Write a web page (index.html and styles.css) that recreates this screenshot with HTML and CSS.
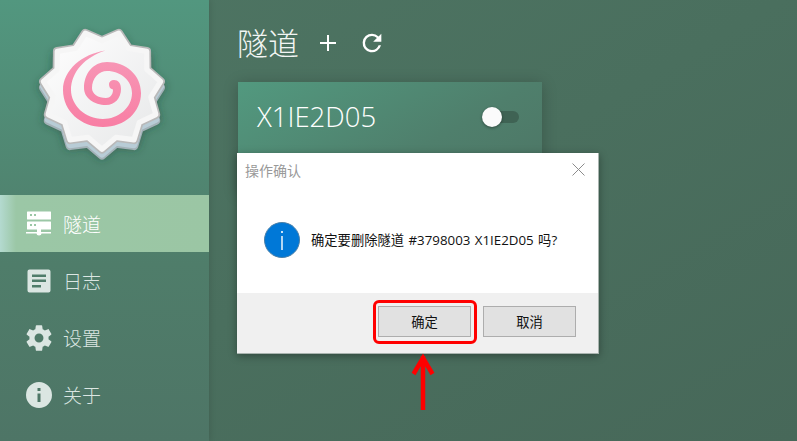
FILE: index.html
```html
<!DOCTYPE html>
<html lang="zh">
<head>
<meta charset="utf-8">
<title>隧道</title>
<link rel="stylesheet" href="styles.css">
</head>
<body>
<div class="app">
  <aside class="sidebar">
    <div class="logo">
      <svg width="209" height="195" viewBox="0 0 209 195">
        <defs>
          <linearGradient id="face" x1="0" y1="0" x2="1" y2="1">
            <stop offset="0" stop-color="#ffffff"/>
            <stop offset="1" stop-color="#e6e7e8"/>
          </linearGradient>
          <linearGradient id="swirl" x1="0" y1="0" x2="0" y2="1">
            <stop offset="0" stop-color="#f79ab8"/>
            <stop offset="1" stop-color="#f87ea4"/>
          </linearGradient>
          <filter id="soft" x="-20%" y="-20%" width="140%" height="140%">
            <feGaussianBlur stdDeviation="5"/>
          </filter>
          <polygon id="star" points="0,61 -14.300,48.900 -33,51.300 -38.500,33.300 -55.500,25.300 -50.400,7.200 -60.400,-8.700 -46.300,-21.100 -46.100,-39.900 -27.500,-42.800 -17.200,-58.500 0,-51 17.200,-58.500 27.500,-42.800 46.100,-39.900 46.300,-21.100 60.400,-8.700 50.400,7.200 55.500,25.300 38.500,33.300 33,51.300 14.300,48.900"/>
        </defs>
        <use href="#star" class="star-shadow" filter="url(#soft)" transform="translate(102 95) scale(.97)"/>
        <use href="#star" class="star-side-edge" transform="translate(102 96) scale(.97)"/>
        <use href="#star" class="star-side" transform="translate(102 95) scale(.97)"/>
        <use href="#star" class="star-edge" transform="translate(102 90) scale(.97)"/>
        <use href="#star" class="star-face" fill="url(#face)" transform="translate(102 90) scale(.97)"/>
        <path fill="url(#swirl)" d="M105.500 50.500 C 82 54, 63 70, 63 90 C 63 111, 81 127, 103 127 C 125 127, 141 112, 141 93 C 141 75, 126 62, 107 62 C 93 62, 84 74, 84 88 C 84 98, 94 105, 106 105 C 115 105, 121 98, 121 89 C 121 83, 118 80, 114 80 C 111 80, 109 82, 109 84 C 109 87, 110 89, 113 89.500 C 113 95, 110 98, 106 98 C 98 98, 92 94, 92 88 C 92 78, 99 71, 107 71 C 121 71, 132 81, 132 93 C 132 108, 118 119, 103 119 C 85 119, 71 105, 71 90 C 71 72, 85 57, 105.500 50.500 Z"/>
      </svg>
    </div>
    <nav class="menu">
      <a class="menu-item active">
        <svg class="menu-icon" viewBox="0 0 26 26" width="26" height="26">
          <path fill="currentColor" fill-rule="evenodd" d="M1.500 0.500h23a.5.5 0 0 1 .5.500v7a.5.5 0 0 1-.5.500h-23a.5.5 0 0 1-.5-.500v-7a.5.5 0 0 1 .5-.500zM4 3v2h2V3zM8 3v2h2V3zM1.500 10.500h23a.5.5 0 0 1 .5.500v7a.5.5 0 0 1-.5.500H15V21h10v1.500H15.500a2.500 2 0 0 1-5 0H0V21h11v-2.500H1.500a.5.500 0 0 1-.5-.500v-7a.5.5 0 0 1 .5-.500zM4 13v2h2v-2zM8 13v2h2v-2z"/>
        </svg>
        <span>隧道</span>
      </a>
      <a class="menu-item">
        <svg class="menu-icon" viewBox="0 0 26 26" width="26" height="26">
          <path fill="currentColor" fill-rule="evenodd" d="M3.500 1.500h19a2 2 0 0 1 2 2v19a2 2 0 0 1-2 2h-19a2 2 0 0 1-2-2v-19a2 2 0 0 1 2-2zM6 6.500v2.500h14V6.500zM6 11.500v2.500h14v-2.500zM6 17v2.500h9V17z"/>
        </svg>
        <span>日志</span>
      </a>
      <a class="menu-item">
        <svg class="menu-icon" viewBox="1.800 1.800 20.400 20.400" width="26" height="26">
          <path fill="currentColor" d="M19.430 12.980c.04-.32.070-.64.070-.98s-.03-.66-.07-.98l2.110-1.650c.19-.15.240-.42.120-.64l-2-3.460c-.12-.22-.39-.3-.61-.22l-2.490 1c-.52-.4-1.080-.73-1.690-.98l-.38-2.650A.49.49 0 0 0 14 2h-4c-.25 0-.46.180-.49.420l-.38 2.650c-.61.250-1.170.590-1.690.980l-2.490-1c-.23-.09-.49 0-.61.220l-2 3.460c-.13.220-.07.490.12.640l2.110 1.650c-.04.320-.07.650-.07.980s.03.660.07.980l-2.110 1.650c-.19.150-.24.420-.12.640l2 3.460c.12.220.39.300.61.220l2.490-1c.52.400 1.080.730 1.690.980l.38 2.650c.03.240.24.420.49.420h4c.25 0 .46-.18.490-.42l.38-2.650c.61-.25 1.170-.59 1.690-.98l2.490 1c.23.090.49 0 .61-.22l2-3.460c.12-.22.070-.49-.12-.64zM12 15.500a3.500 3.500 0 1 1 0-7 3.500 3.500 0 0 1 0 7z"/>
        </svg>
        <span>设置</span>
      </a>
      <a class="menu-item">
        <svg class="menu-icon" viewBox="0 0 26 26" width="26" height="26">
          <path fill="currentColor" fill-rule="evenodd" d="M13 0a13 13 0 1 1 0 26a13 13 0 0 1 0-26zM11.500 6v3h3V6zM11.500 11.500v8.500h3v-8.500z"/>
        </svg>
        <span>关于</span>
      </a>
    </nav>
  </aside>
  <main class="content">
    <header class="heading">
      <h1>隧道</h1>
      <svg class="tool plus" viewBox="0 0 18 18" width="18" height="18">
        <path d="M9 1v16M1 9h16" fill="none" stroke="currentColor" stroke-width="2"/>
      </svg>
      <svg class="tool reload" viewBox="0 0 24 24" width="28" height="28">
        <path fill="currentColor" d="M17.650 6.350A7.958 7.958 0 0 0 12 4a8 8 0 1 0 7.730 10h-2.080A5.990 5.990 0 0 1 12 18a6 6 0 1 1 0-12c1.660 0 3.140.690 4.220 1.780L13 11h7V4z"/>
      </svg>
    </header>
    <section class="card">
      <span class="card-name">X1IE2D05</span>
      <span class="switch"><span class="knob"></span></span>
    </section>
  </main>
</div>

<div class="dialog">
  <div class="dialog-title">
    <span>操作确认</span>
    <svg class="close" viewBox="0 0 13 13" width="13" height="13">
      <path d="M.5.500l12 12M12.500.500l-12 12" fill="none" stroke="#8c8c8c" stroke-width="1"/>
    </svg>
  </div>
  <div class="dialog-body">
    <svg class="info" viewBox="0 0 36 36" width="36" height="36">
      <circle cx="18" cy="18" r="17.500" fill="#0078d7" stroke="#4a7fa8" stroke-width="1"/>
      <rect x="17.300" y="14" width="1.400" height="14" fill="#fff"/>
      <rect x="17.200" y="9" width="1.600" height="2" fill="#fff"/>
    </svg>
    <p>确定要删除隧道 #3798003 X1IE2D05 吗?</p>
  </div>
  <div class="dialog-foot">
    <button class="btn">确定</button>
    <button class="btn">取消</button>
  </div>
</div>

<div class="highlight"></div>
<svg class="arrow" viewBox="0 0 24 58" width="24" height="58">
  <path d="M12 3V57M2.500 21L12 5L21.500 21" fill="none" stroke="#ff0000" stroke-width="4.500"/>
</svg>
</body>
</html>
```
FILE: styles.css
```css
* {
  box-sizing: border-box;
}

html,
body {
  margin: 0;
  height: 100%;
  overflow: hidden;
}

body {
  font-family: "Open Sans", "Noto Sans CJK SC", sans-serif;
  background: #4a6b5c;
}

.app {
  display: flex;
  width: 797px;
  height: 441px;
  background: linear-gradient(150deg, #4e7563 0%, #4a6f5e 50%, #476859 100%);
}

.sidebar {
  flex: 0 0 209px;
  background: linear-gradient(180deg, #52977f 0%, #4f7d6a 60%, #4e7566 100%);
  box-shadow: 1px 0 6px rgba(0, 0, 0, 0.12);
  display: flex;
  flex-direction: column;
}

.logo {
  height: 195px;
  flex: none;
}

.logo svg {
  display: block;
}

.star-shadow {
  fill: rgba(30, 60, 50, 0.5);
  stroke: rgba(30, 60, 50, 0.5);
  stroke-width: 9;
}

.star-side-edge {
  fill: #a3b1b7;
  stroke: #a3b1b7;
  stroke-width: 9;
  stroke-linejoin: round;
}

.star-side {
  fill: #b8ccd6;
  stroke: #b8ccd6;
  stroke-width: 7;
  stroke-linejoin: round;
}

.star-edge {
  fill: #b9b9b9;
  stroke: #b9b9b9;
  stroke-width: 9;
  stroke-linejoin: round;
}

.star-face {
  stroke: #f6f6f6;
  stroke-width: 5.500;
  stroke-linejoin: round;
}

.menu {
  display: flex;
  flex-direction: column;
}

.menu-item {
  height: 57px;
  display: flex;
  align-items: center;
  gap: 12px;
  padding-left: 26px;
  color: #dbe6e2;
  font-size: 19px;
  font-weight: 300;
}

.menu-item span {
  margin-left: -1px;
}

.menu-item.active {
  color: #fff;
  background: linear-gradient(90deg, #b4dad0 0, #9bc7a6 16px, #9bc6a4 100%);
}

.menu-icon {
  flex: none;
}

.content {
  flex: 1;
  padding: 21px 29px;
  position: relative;
}

.heading {
  display: flex;
  align-items: center;
  height: 44px;
  margin-left: -1px;
  color: #fff;
}

.heading h1 {
  margin: 0 20px 0 0;
  font-size: 31px;
  font-weight: 300;
  line-height: 44px;
  color: #f2f5f3;
}

.tool {
  flex: none;
}

.plus {
  margin-right: 21px;
}

.card {
  width: 304px;
  height: 110px;
  margin-top: 17px;
  padding: 0 23px 0 19px;
  display: flex;
  justify-content: space-between;
  background: linear-gradient(150deg, #52997f 0%, #4f7f6c 60%, #4d7565 100%);
  box-shadow: 0 2px 14px rgba(0, 0, 0, 0.22);
}

.card-name {
  margin-top: 17px;
  font-size: 27.500px;
  line-height: 36px;
  font-weight: 300;
  color: #fff;
}

.switch {
  position: relative;
  width: 37px;
  height: 12px;
  margin-top: 29px;
  border-radius: 6px;
  background: #3f6354;
}

.knob {
  position: absolute;
  left: 0;
  top: -4px;
  width: 20px;
  height: 20px;
  border-radius: 50%;
  background: #fbfbfb;
  box-shadow: 0 1px 3px rgba(0, 0, 0, 0.4);
}

.dialog {
  position: absolute;
  left: 237px;
  top: 153px;
  width: 362px;
  height: 201px;
  display: flex;
  flex-direction: column;
  background: #fff;
  border: 1px solid #a9b4af;
  border-width: 0 1px 1px 0;
  box-shadow: 0 2px 8px rgba(0, 0, 0, 0.35);
}

.dialog-title {
  height: 33px;
  padding: 0 13px 0 8px;
  display: flex;
  align-items: center;
  justify-content: space-between;
  font-size: 14px;
  color: #999;
}

.dialog-body {
  flex: 1;
  display: flex;
  align-items: center;
  padding: 0 0 0 27px;
  gap: 11px;
}

.dialog-body p {
  margin: 0;
  font-size: 13.300px;
  word-spacing: 1px;
  color: #111;
}

.info {
  flex: none;
}

.dialog-foot {
  height: 60px;
  flex: none;
  background: #f0f0f0;
  display: flex;
  justify-content: flex-end;
  gap: 12px;
  padding: 13px 22px 0 0;
}

.btn {
  width: 93px;
  height: 31px;
  padding: 0;
  background: #e1e1e1;
  border: 1px solid #adadad;
  font: inherit;
  font-size: 13.300px;
  color: #111;
}

.highlight {
  position: absolute;
  left: 373px;
  top: 300px;
  width: 104px;
  height: 44px;
  border: 3px solid #ff0000;
  border-radius: 6px;
}

.arrow {
  position: absolute;
  left: 411px;
  top: 353px;
}
```
